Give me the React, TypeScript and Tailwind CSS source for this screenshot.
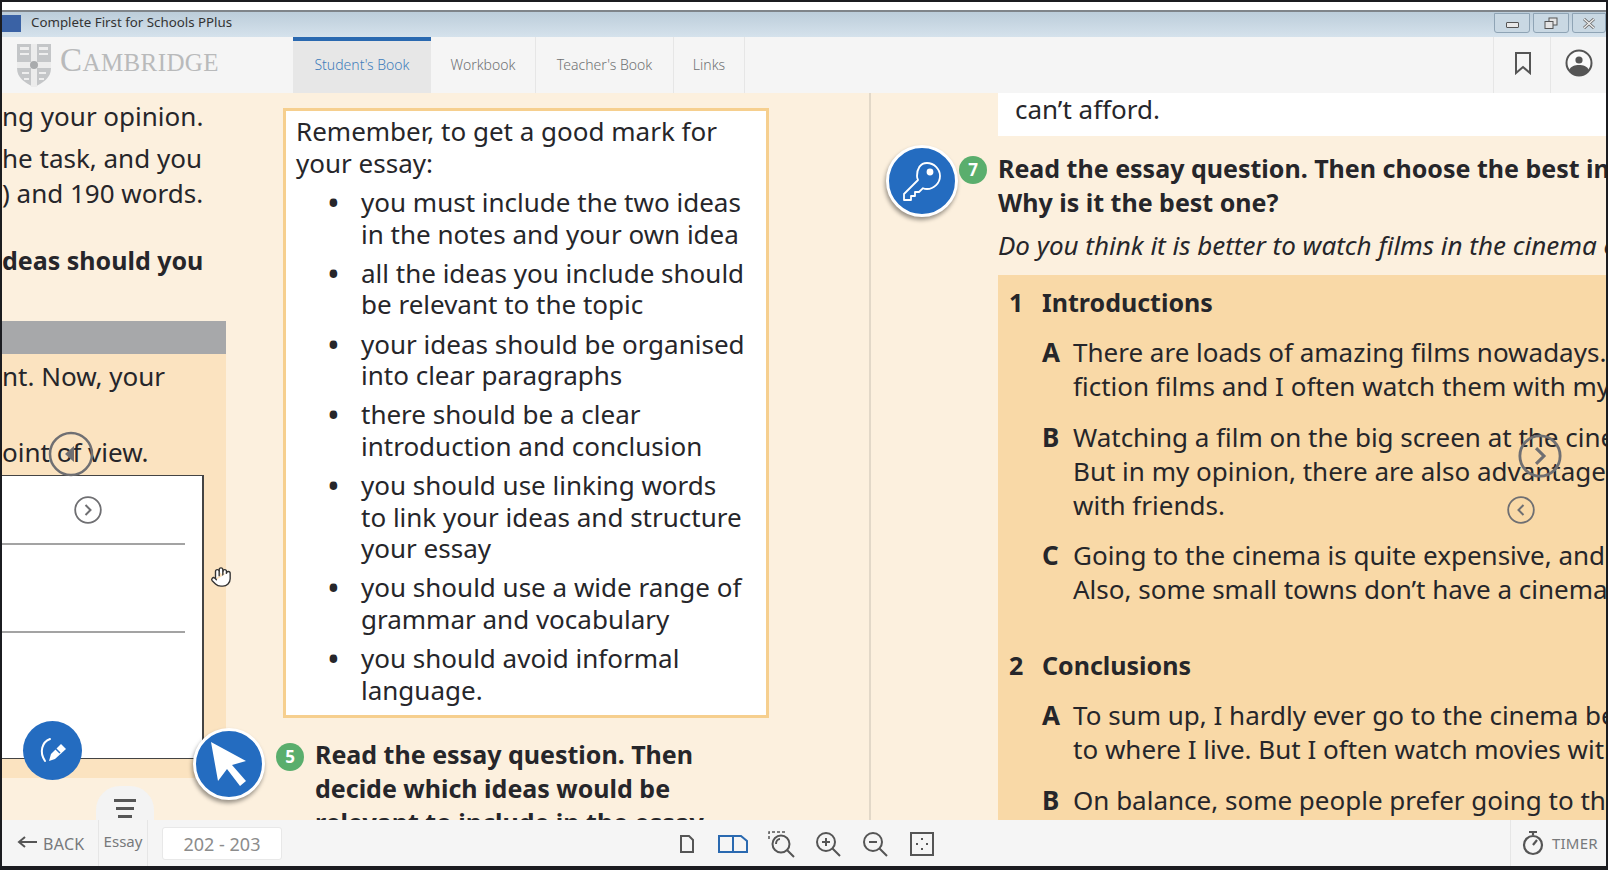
import React from "react";
import { Hand } from "lucide-react";

const bullets = [
  ["you must include the two ideas", "in the notes and your own idea"],
  ["all the ideas you include should", "be relevant to the topic"],
  ["your ideas should be organised", "into clear paragraphs"],
  ["there should be a clear", "introduction and conclusion"],
  ["you should use linking words", "to link your ideas and structure", "your essay"],
  ["you should use a wide range of", "grammar and vocabulary"],
  ["you should avoid informal", "language."],
];

const sections = [
  {
    num: "1",
    title: "Introductions",
    gapAfter: "mb-[42px]",
    options: [
      { letter: "A", lines: ["There are loads of amazing films nowadays. I love", "fiction films and I often watch them with my friends."] },
      { letter: "B", lines: ["Watching a film on the big screen at the cinema is great.", "But in my opinion, there are also advantages to watching", "with friends."] },
      { letter: "C", lines: ["Going to the cinema is quite expensive, and sometimes", "Also, some small towns don\u2019t have a cinema."] },
    ],
  },
  {
    num: "2",
    title: "Conclusions",
    gapAfter: "",
    options: [
      { letter: "A", lines: ["To sum up, I hardly ever go to the cinema because", "to where I live. But I often watch movies with friends."] },
      { letter: "B", lines: ["On balance, some people prefer going to the cinema"] },
    ],
  },
];

const tabs = [
  { label: "Student's Book", w: "w-[138px]", active: true },
  { label: "Workbook", w: "w-[105px]", active: false },
  { label: "Teacher's Book", w: "w-[138px]", active: false },
  { label: "Links", w: "w-[71px]", active: false },
];

const Crest = () => (
  <svg width="36" height="46" viewBox="0 0 36 46">
    <path d="M1 2h34v24c0 10-8 15-17 19C9 41 1 36 1 26z" fill="#c4c6c8" />
    <path d="M15 2h6v43h-6zM1 20h34v6H1z" fill="#ececec" />
    <path d="M4 5h9v3H4zM23 5h9v3h-9zM4 11h9v2H4zM23 11h9v2h-9zM6 30h7v2H6zM23 30h7v2h-7zM8 36h5v2H8zM23 36h5v2h-5z" fill="#eeeeee" />
    <circle cx="18" cy="23" r="4" fill="#a9abad" />
  </svg>
);

const StepBadge = ({ n }: { n: string }) => (
  <div className="flex h-[28px] w-[28px] shrink-0 items-center justify-center rounded-full bg-[#5aae6d] text-[17px] font-bold text-white">
    {n}
  </div>
);

const ArrowCircle = ({ dir, size, className }: { dir: "left" | "right"; size: number; className: string }) => (
  <svg width={size} height={size} viewBox="0 0 28 28" className={className} fill="none" stroke="#6f6f72">
    <circle cx="14" cy="14" r="12.8" strokeWidth="1.800" />
    <path d={dir === "right" ? "M11.5 9l5 5-5 5" : "M16.5 9l-5 5 5 5"} strokeWidth="2" />
  </svg>
);

export default function App() {
  return (
    <div className="relative flex h-[870px] w-[1608px] flex-col overflow-hidden border-x-2 border-b-4 border-t-2 border-x-[#1b1c20] border-b-[#1b1c20] border-t-[#1b1c20] bg-white font-['Noto_Sans',sans-serif] text-[#26262a]">
      <div className="h-[8px] shrink-0 bg-white" />
      {/* window title */}
      <div className="flex h-[27px] shrink-0 items-center border-t-2 border-[#7f8489] bg-gradient-to-b from-[#bccdda] to-[#d5e2ec] pb-[3px]">
        <div className="h-[17px] w-[19px] bg-[#3a62a5]" />
        <span className="ml-[10px] text-[13.3px] text-[#333]">Complete First for Schools PPlus</span>
        <div className="ml-auto flex h-[21px] gap-[3px] self-start pt-[1px]">
          <div className="flex w-[36px] items-center justify-center rounded-b-[3px] border border-[#8fa4b5] bg-[#c9d8e3]">
            <div className="mt-[3px] h-[6px] w-[13px] rounded-[1px] border border-[#555] bg-[#e8e8e8]" />
          </div>
          <div className="flex w-[36px] items-center justify-center rounded-b-[3px] border border-[#8fa4b5] bg-[#c9d8e3]">
            <svg width="14" height="13" viewBox="0 0 14 13" fill="#e4e4e4" stroke="#555">
              <rect x="5" y="1" width="8" height="7" />
              <rect x="1" y="4.5" width="8" height="7" />
            </svg>
          </div>
          <div className="flex w-[34px] items-center justify-center rounded-b-[3px] border border-[#8fa4b5] bg-[#c9d8e3]">
            <svg width="14" height="11" viewBox="0 0 14 11">
              <path d="M2 1l10 9M12 1L2 10" stroke="#666" strokeWidth="3" />
              <path d="M2 1l10 9M12 1L2 10" stroke="#eee" strokeWidth="1.4" />
            </svg>
          </div>
        </div>
      </div>

      {/* nav */}
      <div className="flex h-[56px] shrink-0 bg-[#f5f5f5]">
        <div className="flex w-[291px] items-center pl-[14px]">
          <Crest />
          <span className="mb-[8px] ml-[8px] font-['Liberation_Serif',serif] text-[25px] tracking-[0.4px] text-[#b9babb]">
            <span className="text-[33px]">C</span>AMBRIDGE
          </span>
        </div>
        {tabs.map((t) => (
          <div
            key={t.label}
            className={
              t.active
                ? "flex w-[138px] items-center justify-center border-t-4 border-[#2a69b0] bg-[#e7e7e7] pb-[6px] text-[14px] font-light text-[#3f7dbb]"
                : `flex ${t.w} items-center justify-center border-r border-[#e6e6e6] pb-[2px] text-[14px] font-light text-[#6f7173]`
            }
          >
            {t.label}
          </div>
        ))}
        <div className="ml-auto flex h-full w-[58px] items-center justify-center border-x border-[#e6e6e6] pb-[4px] pl-[2px]">
          <svg width="18" height="24" viewBox="0 0 18 24" fill="none" stroke="#555" strokeWidth="2">
            <path d="M2 2h14v20l-7-6-7 6z" />
          </svg>
        </div>
        <div className="flex w-[55px] items-center justify-center pb-[4px] pl-[1px]">
          <svg width="28" height="28" viewBox="0 0 28 28">
            <circle cx="14" cy="14" r="12.5" fill="#fafafa" stroke="#555" strokeWidth="2" />
            <circle cx="14" cy="11" r="3.6" fill="#555" />
            <path d="M4 21c2-4 6-5 10-5s8 1 10 5c-2 4-6 6-10 6s-8-2-10-6z" fill="#555" />
          </svg>
        </div>
      </div>

      {/* pages */}
      <div className="relative flex min-h-0 flex-1 overflow-hidden">
        {/* left page */}
        <div className="flex h-full w-[869px] shrink-0 overflow-hidden border-r-2 border-[#e2d8c8] bg-[#fcf0de]">
          <div className="flex w-[224px] shrink-0 flex-col text-[26px]">
            <div className="h-[6px]" />
            <p className="h-[35px] whitespace-nowrap leading-[35px]">ng your opinion.</p>
            <p className="mt-[7px] h-[35px] whitespace-nowrap leading-[35px]">he task, and you</p>
            <p className="h-[34px] whitespace-nowrap leading-[34px]">) and 190 words.</p>
            <p className="mt-[33px] h-[34px] whitespace-nowrap text-[25px] font-bold leading-[34px]">deas should you</p>
            <div className="mt-[44px] h-[33px] bg-[#a7a8aa]" />
            <div className="h-[424px] bg-[#fbe3c0]">
              <p className="mt-[5px] h-[34px] whitespace-nowrap leading-[34px]">nt. Now, your</p>
              <p className="mt-[42px] h-[34px] whitespace-nowrap leading-[34px]">oint of view.</p>
              <div className="mt-[6px] h-[284px] w-[202px] border-y border-r-2 border-[#444] bg-white">
                <div className="mt-[67px] h-[2px] w-[183px] bg-[#a3a3a3]" />
                <div className="mt-[86px] h-[2px] w-[183px] bg-[#a3a3a3]" />
              </div>
            </div>
          </div>

          <div className="ml-[57px] flex w-[486px] shrink-0 flex-col">
            <div className="mt-[15px] h-[610px] shrink-0 border-[3px] border-[#f6cf8e] bg-white pl-[10px] pt-[5px] text-[26px] leading-[31.5px]">
              <p>Remember, to get a good mark for</p>
              <p>your essay:</p>
              <ul className="mt-[8px] flex flex-col gap-[7.8px]">
                {bullets.map((lines) => (
                  <li key={lines[0]} className="flex">
                    <span className="w-[65px] shrink-0 pl-[31px] text-[34px] leading-[31.5px]">•</span>
                    <span className="whitespace-nowrap">
                      {lines.map((l) => (
                        <span key={l} className="block">
                          {l}
                        </span>
                      ))}
                    </span>
                  </li>
                ))}
              </ul>
            </div>
            <div className="relative mt-[19px] flex pl-[32px] text-[25px] font-bold leading-[34px]">
              <div className="whitespace-nowrap">
                <p>Read the essay question. Then</p>
                <p>decide which ideas would be</p>
                <p>relevant to include in the essay.</p>
              </div>
            </div>
          </div>
        </div>

        {/* right page */}
        <div className="min-w-0 flex-1 overflow-hidden bg-[#fcf0de] pl-[127px] text-[26px]">
          <div className="flex h-[43px] items-center whitespace-nowrap bg-white pb-[11px] pl-[17px]">can&rsquo;t afford.</div>
          <div className="mt-[15px] whitespace-nowrap text-[25px] font-bold leading-[34px]">
            <p>Read the essay question. Then choose the best introduction.</p>
            <p>Why is it the best one?</p>
          </div>
          <p className="mt-[9px] whitespace-nowrap italic leading-[34px]">Do you think it is better to watch films in the cinema or at home?</p>
          <div className="mt-[13px] h-[600px] bg-[#f9d9a7] pl-[11px] pt-[10px]">
            {sections.map((s) => (
              <div key={s.num} className={s.gapAfter}>
                <div className="flex text-[25px] font-bold leading-[34px]">
                  <span className="w-[33px] shrink-0">{s.num}</span>
                  <span>{s.title}</span>
                </div>
                <div className="mt-[16px] flex flex-col gap-[16.5px]">
                  {s.options.map((o) => (
                    <div key={o.letter} className="ml-[33px] flex whitespace-nowrap leading-[34px]">
                      <span className="w-[31px] shrink-0 font-bold">{o.letter}</span>
                      <div>
                        {o.lines.map((l) => (
                          <p key={l}>{l}</p>
                        ))}
                      </div>
                    </div>
                  ))}
                </div>
              </div>
            ))}
          </div>
        </div>

        {/* floating buttons over the pages */}
        <svg width="46" height="46" viewBox="0 0 46 46" className="absolute left-[46px] top-[338px]" fill="none">
          <circle cx="23" cy="23" r="21" stroke="#6f6f72" strokeWidth="2.500" />
          <path d="M26 15l-9 8 9 8z" fill="#6f6f72" />
        </svg>
        <ArrowCircle dir="right" size={28} className="absolute left-[72px] top-[403px]" />
        <ArrowCircle dir="right" size={44} className="absolute left-[1516px] top-[341px]" />
        <ArrowCircle dir="left" size={28} className="absolute left-[1505px] top-[403px]" />

        <Hand size={22} fill="#fff" stroke="#333" strokeWidth={1.500} className="absolute left-[208px] top-[473px]" />

        <div className="absolute left-[21px] top-[628px] flex h-[59px] w-[59px] items-center justify-center rounded-full bg-[#246cc0]">
          <svg width="34" height="34" viewBox="0 0 34 34" fill="none">
            <path d="M14 5C6 8 3 18 9 27" stroke="#fff" strokeWidth="2" strokeLinecap="round" />
            <path d="M25 10l5 5-11 10-6 2 2-7z" fill="#fff" />
            <path d="M19 14l5 5" stroke="#246cc0" strokeWidth="1.500" />
          </svg>
        </div>

        <div className="absolute left-[191px] top-[635px] flex h-[72px] w-[72px] items-center justify-center rounded-full border-[3px] border-white bg-[#246cc0] shadow-[-1px_3px_4px_rgba(0,0,0,0.4)]">
          <svg width="44" height="50" viewBox="0 0 44 50" fill="#fff">
            <path d="M4 3l35 19-14 4 14 16-6 5-13-17-9 12z" />
          </svg>
        </div>
        <div className="absolute left-[274px] top-[650px]">
          <StepBadge n="5" />
        </div>

        <div className="absolute left-[884px] top-[52px] flex h-[72px] w-[72px] items-center justify-center rounded-full border-[3px] border-white bg-[#246cc0] shadow-[-1px_3px_4px_rgba(0,0,0,0.4)]">
          <svg width="42" height="42" viewBox="0 0 42 42" fill="none" stroke="#fff" strokeWidth="1.800" strokeLinejoin="round">
            <path d="M26 3c7 0 13 6 13 13s-6 13-13 13c-2 0-3-.3-4-.8L18 32h-4v4h-4v4H3v-6l14-14c-.5-1-1-3-1-4C16 9 19 3 26 3z" />
            <circle cx="29" cy="12" r="2.500" fill="#fff" />
          </svg>
        </div>
        <div className="absolute left-[957px] top-[63px]">
          <StepBadge n="7" />
        </div>

        {/* essay tab */}
        <div className="absolute bottom-0 left-[94px] flex h-[34px] w-[58px] justify-center rounded-t-[24px] bg-[#f3f3f3] pt-[12px]">
          <svg width="24" height="21" viewBox="0 0 24 21" fill="#555">
            <rect x="1" y="1" width="22" height="3" />
            <rect x="3" y="9" width="18" height="3" />
            <rect x="5" y="17" width="14" height="3" />
          </svg>
        </div>
      </div>

      {/* bottom toolbar */}
      <div className="flex h-[46px] shrink-0 items-center bg-[#f5f5f5] text-[#77797b]">
        <div className="flex w-[96px] items-center pl-[15px]">
          <svg width="20" height="14" viewBox="0 0 20 14" fill="none" stroke="#555" strokeWidth="2">
            <path d="M20 6H3M8 1L2 6l6 5" />
          </svg>
          <span className="ml-[6px] pt-[2px] text-[16px] tracking-[0.3px]">BACK</span>
        </div>
        <div className="flex h-full w-[50px] justify-center border-x border-[#e6e6e6] pt-[10px] text-[15px]">Essay</div>
        <div className="ml-[14px] flex h-[33px] w-[120px] items-center justify-center rounded-[3px] border border-[#e8e8e8] bg-white pt-[2px] text-[18px] text-[#8c8c8c]">
          202 - 203
        </div>
        <div className="ml-[397px] mt-[2px] flex items-center">
          <svg width="16" height="20" viewBox="0 0 16 20" fill="none" stroke="#555" strokeWidth="2">
            <path d="M2 2h8l4 4v12H2z" />
          </svg>
          <svg width="30" height="20" viewBox="0 0 30 20" fill="none" stroke="#2a69b0" strokeWidth="2" className="ml-[23px]">
            <path d="M1 2h22l6 5v11H1zM15 2v16" />
          </svg>
          <svg width="30" height="28" viewBox="0 0 30 28" fill="none" stroke="#555" strokeWidth="2" className="ml-[19px]">
            <path d="M2 9V2h16" strokeDasharray="3 2" strokeWidth="1.500" />
            <circle cx="14" cy="14" r="8.500" />
            <path d="M20 20l7 7M9 14c0-3 2-5 4-5" />
          </svg>
          <svg width="26" height="26" viewBox="0 0 26 26" fill="none" stroke="#555" strokeWidth="2" className="ml-[18px]">
            <circle cx="11" cy="11" r="9" />
            <path d="M17.500 17.500L25 25M7 11h8M11 7v8" />
          </svg>
          <svg width="26" height="26" viewBox="0 0 26 26" fill="none" stroke="#555" strokeWidth="2" className="ml-[21px]">
            <circle cx="11" cy="11" r="9" />
            <path d="M17.500 17.500L25 25M7 11h8" />
          </svg>
          <svg width="24" height="24" viewBox="0 0 24 24" fill="none" stroke="#555" strokeWidth="2" className="ml-[22px]">
            <rect x="1" y="1" width="22" height="22" />
            <path d="M12 6v2M12 16v2M6 12h2M16 12h2" />
          </svg>
        </div>
        <div className="ml-auto flex h-full w-[96px] items-center border-l border-[#e6e6e6] pl-[11px]">
          <svg width="22" height="26" viewBox="0 0 22 26" fill="none" stroke="#555" strokeWidth="2.200">
            <path d="M7 2h8M11 2v3" />
            <circle cx="11" cy="15" r="9" />
            <path d="M11 15l4-5" />
          </svg>
          <span className="ml-[8px] text-[15px] tracking-[0.2px]">TIMER</span>
        </div>
      </div>
    </div>
  );
}
